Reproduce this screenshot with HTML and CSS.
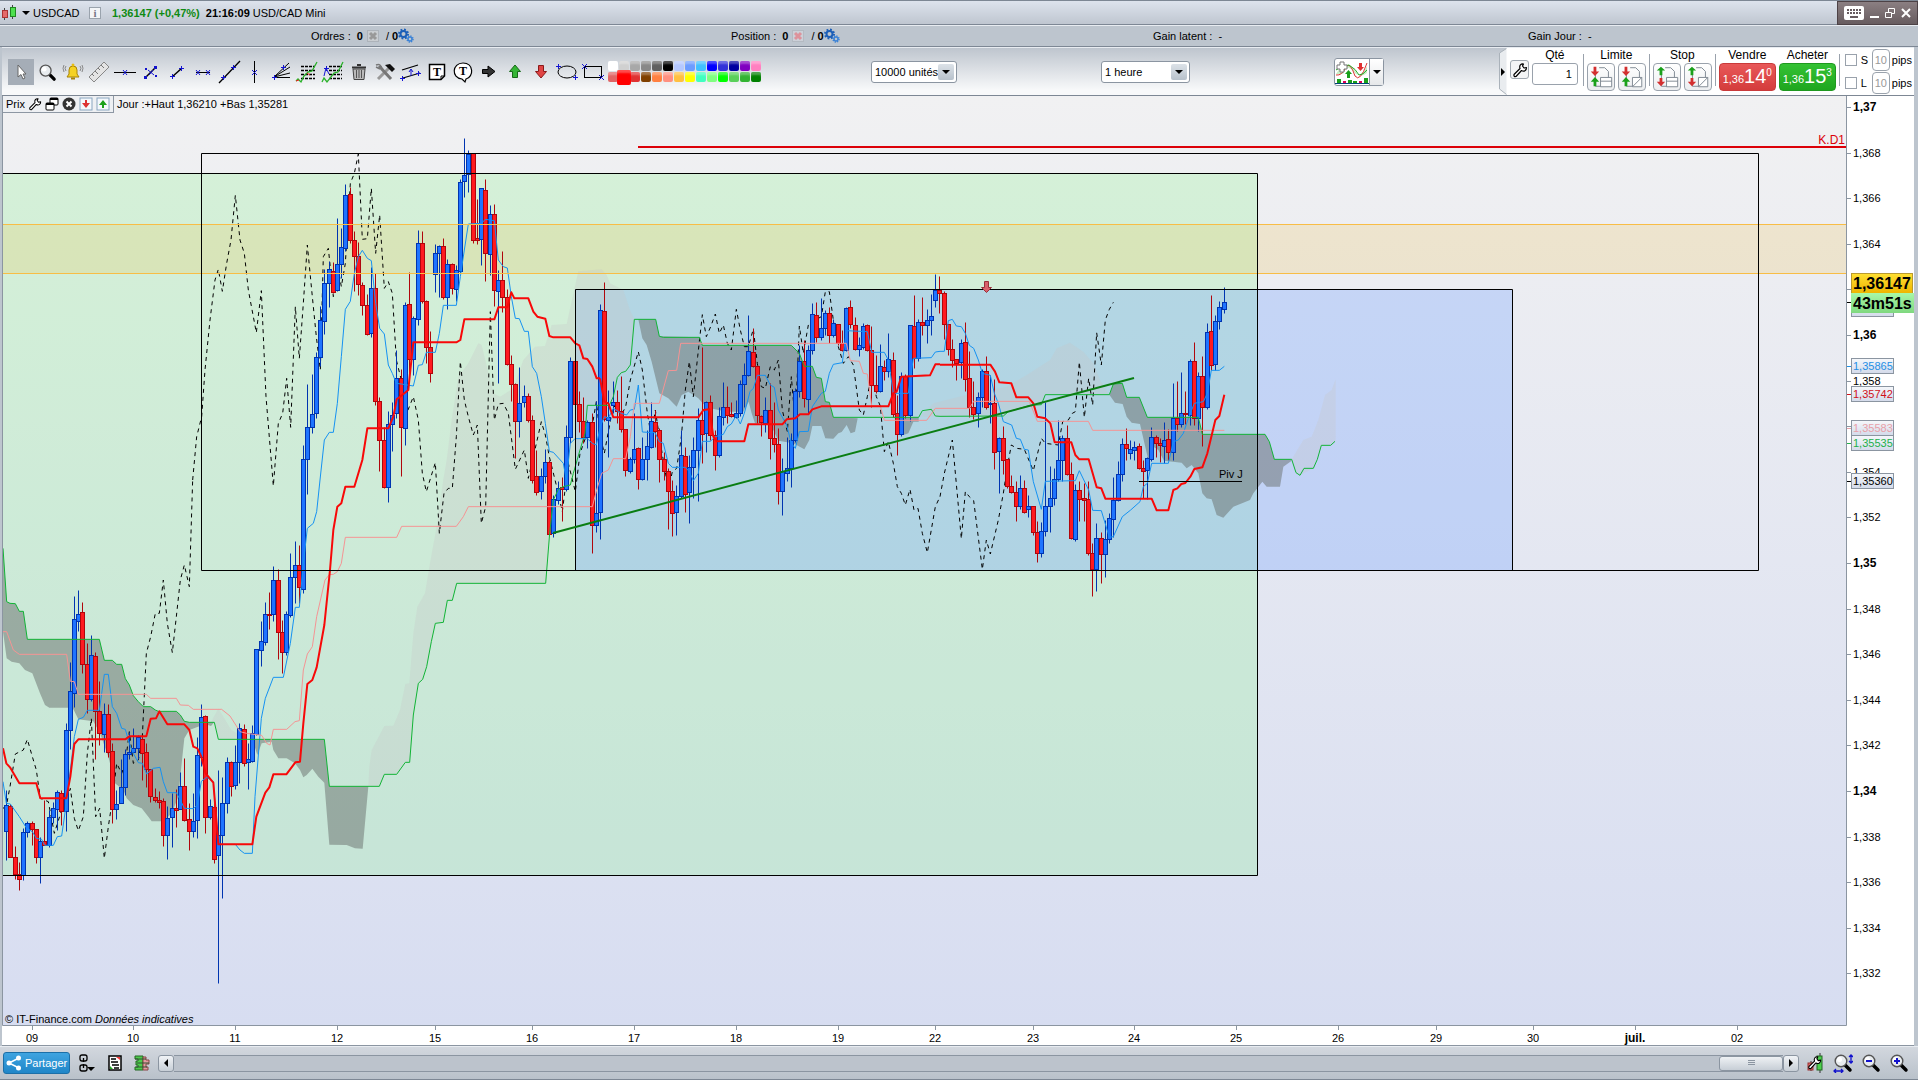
FILE: index.html
```
<!DOCTYPE html>
<html lang="fr">
<head>
    <meta charset="UTF-8">
    <meta name="viewport" content="width=device-width, initial-scale=1.0">
    <title>USDCAD - USD/CAD Mini</title>
    <link rel="stylesheet" href="styles.css">
</head>
<body>
    <svg class="defs" aria-hidden="true">
        <defs>
            <symbol id="gears" viewBox="0 0 16 16">
                <circle cx="5.500" cy="6" r="3" fill="none" stroke="#1c5fb8" stroke-width="2"/>
                <circle cx="5.500" cy="6" r="4.500" fill="none" stroke="#1c5fb8" stroke-width="2" stroke-dasharray="1.800 1.730"/>
                <circle cx="12" cy="11" r="2" fill="none" stroke="#3b82d6" stroke-width="1.500"/>
                <circle cx="12" cy="11" r="3" fill="none" stroke="#3b82d6" stroke-width="1.500" stroke-dasharray="1.200 1.150"/>
            </symbol>
            <symbol id="wrench" viewBox="0 0 16 16">
                <path d="M2 12.500 L8 6.500 C7 3.500 9 1.500 11.500 2 L10.500 4 L12 6 L14.500 5.500 C14.500 8.500 12 10 9.500 8.500 L4 14.500 Q1.500 15 2 12.500 Z" fill="#fff" stroke="#000" stroke-width="1.200" stroke-linejoin="round"/>
            </symbol>
            <symbol id="glass" viewBox="0 0 20 20">
                <path d="M11.500 11.500 L17 17" stroke="#000" stroke-width="3.500" stroke-linecap="round"/>
                <circle cx="8" cy="8" r="5.800" fill="#e8ecef" stroke="#555" stroke-width="1.400"/>
                <circle cx="6.500" cy="6.500" r="2.500" fill="#fff"/>
            </symbol>
            <symbol id="order-limit" viewBox="0 0 28 28">
                <path d="M12 4 H18 L22 8 V16 M8 10 V24 H14" fill="none" stroke="#7b858f"/>
                <path d="M6 3 H9 V8 H12 L7.500 13 L3 8 H6 Z" fill="#d32f2f"/>
                <path d="M6 24 H9 V19 H12 L7.500 14 L3 19 H6 Z" fill="#1aa01a"/>
            </symbol>
            <symbol id="order-stop" viewBox="0 0 28 28">
                <path d="M12 4 H18 L22 8 V16 M8 10 V24 H14" fill="none" stroke="#7b858f"/>
                <path d="M6 12 H9 V7 H12 L7.500 3 L3 7 H6 Z" fill="#1aa01a"/>
                <path d="M6 15 H9 V19 H12 L7.500 24 L3 19 H6 Z" fill="#d32f2f"/>
            </symbol>
            <symbol id="box-line" viewBox="0 0 28 28"><path d="M13.500 14.500 H25.500 V24.500 H13.500 Z M13.500 18.500 H25.500" fill="#fff" stroke="#7b858f"/></symbol>
            <symbol id="box-slash" viewBox="0 0 28 28"><path d="M14.500 14.500 H24.500 V24.500 H14.500 Z M14.500 24.500 L24.500 14.500" fill="#fff" stroke="#7b858f"/></symbol>
        </defs>
    </svg>

    <header class="titlebar">
        <svg class="logo" width="16" height="16" viewBox="0 0 16 16">
            <path d="M3.500 3 V15 M11.500 0 V14" stroke="#444"/>
            <rect x="1.500" y="5.500" width="5" height="7" fill="#e46a6a" stroke="#a33"/>
            <rect x="9.500" y="2.500" width="5" height="9" fill="#4ee04e" stroke="#282"/>
        </svg>
        <span class="caret"></span>
        <span class="symbol">USDCAD</span>
        <button class="info" title="Informations">i</button>
        <b class="quote">1,36147 (+0,47%)</b>
        <b class="clock">21:16:09</b>
        <span>USD/CAD Mini</span>
        <div class="window-buttons">
            <button title="Clavier"><svg width="20" height="14" viewBox="0 0 20 14"><rect width="20" height="14" rx="2" fill="#fff"/><path d="M3 4 H17 M3 7 H17" stroke="#675c60" stroke-width="2" stroke-dasharray="2 1"/><path d="M6 11 H14" stroke="#675c60" stroke-width="2"/></svg></button>
            <button title="Réduire"><svg width="9" height="14" viewBox="0 0 9 14"><path d="M0 11 H9" stroke="#fff" stroke-width="2"/></svg></button>
            <button title="Restaurer"><svg width="10" height="14" viewBox="0 0 10 14"><path d="M3.500 6 V2.500 H9.500 V7.500 H7 M0.500 6.500 H6.500 V11.500 H0.500 Z" fill="none" stroke="#fff"/></svg></button>
            <button title="Fermer"><svg width="10" height="14" viewBox="0 0 10 14"><path d="M1 3 L9 11 M9 3 L1 11" stroke="#fff" stroke-width="2"/></svg></button>
        </div>
    </header>

    <section class="status">
        <div>Ordres : <b>0</b>
            <svg width="14" height="14" viewBox="0 0 14 14"><rect x="1.500" y="1.500" width="11" height="11" fill="#c9cdd1" stroke="#adb3ba"/><path d="M4 4 L10 10 M10 4 L4 10" stroke="#999" stroke-width="3"/></svg>
            <span class="slash">/</span> <b>0</b><svg class="gear" width="16" height="16"><use href="#gears"/></svg>
        </div>
        <div>Position : <b>0</b>
            <svg width="14" height="14" viewBox="0 0 14 14"><rect x="1.500" y="1.500" width="11" height="11" fill="#ccd0d8" stroke="#b4bac2"/><path d="M4 4 L10 10 M10 4 L4 10" stroke="#dd929b" stroke-width="3"/></svg>
            <span class="slash">/</span> <b>0</b><svg class="gear" width="16" height="16"><use href="#gears"/></svg>
        </div>
        <div>Gain latent : &nbsp;-</div>
        <div>Gain Jour : &nbsp;-</div>
    </section>

    <section class="toolbar">
        <div class="tools">
            <button class="active" title="Sélection"><svg viewBox="0 0 26 26"><path d="M10 6 V18 L13 15.500 L15 20 L17 19 L15 15 H18 Z" fill="#fff" stroke="#666"/></svg></button>
            <button title="Loupe"><svg viewBox="0 0 26 26"><use href="#glass" x="4" y="4" width="19" height="19"/></svg></button>
            <button title="Alerte"><svg viewBox="0 0 26 26"><path d="M7 18 L9 15 V11 Q9 7 13 7 Q17 7 17 11 V15 L19 18 Z" fill="#f5d223" stroke="#a88408"/><circle cx="13" cy="6" r="1.500" fill="#e7bd10"/><path d="M11 19.500 H15" stroke="#a88408" stroke-width="2"/><path d="M6 7 Q4 9 6 12 M4 6 Q2 9 4 13 M20 7 Q22 9 20 12 M22 6 Q24 9 22 13" fill="none" stroke="#888"/></svg></button>
            <button title="Règle"><svg viewBox="0 0 26 26"><path d="M3 18 L18 3 L23 8 L8 23 Z" fill="#e4e4e4" stroke="#888"/><path d="M6 15 L8 17 M9 12 L12 15 M12 9 L14 11 M15 6 L18 9" stroke="#777"/></svg></button>
            <button title="Ligne horizontale"><svg viewBox="0 0 26 26"><path d="M2 13.500 H24" stroke="#000"/><path class="mark" d="M11 11 L15 16 M15 11 L11 16"/></svg></button>
            <button title="Segment"><svg viewBox="0 0 26 26"><path d="M8 18 L18 8" stroke="#000" stroke-width="1.500"/><path d="M6 17 h3 v3 h-3 Z M16 7 h3 v3 h-3 Z M7 9 h2 v2 h-2 Z M17 16 h2 v2 h-2 Z" fill="#11c"/><path class="mark" d="M10 11 L16 16 M11 16 L15 11"/></svg></button>
            <button title="Droite"><svg viewBox="0 0 26 26"><path d="M8 18 L18 9" stroke="#000" stroke-width="1.500"/><path class="mark" d="M6 17.500 H11 M8.500 15 V20 M15 9.500 H20 M17.500 7 V12"/></svg></button>
            <button title="Segment horizontal"><svg viewBox="0 0 26 26"><path d="M6 13.500 H20" stroke="#000"/><path class="mark" d="M6 11 L10 16 M10 11 L6 16 M16 11 L20 16 M20 11 L16 16"/></svg></button>
            <button title="Ligne de tendance"><svg viewBox="0 0 26 26"><path d="M3 24 L24 2" stroke="#000" stroke-width="1.300"/><path class="mark" d="M5 18.500 H10 M7.500 16 V21 M15 8.500 H20 M17.500 6 V11"/></svg></button>
            <button title="Ligne verticale"><svg viewBox="0 0 26 26"><path d="M12.500 2 V24" stroke="#000"/><path class="mark" d="M10 11 L15 16 M15 11 L10 16"/></svg></button>
            <button title="Éventail"><svg viewBox="0 0 26 26"><path d="M6 18.500 H22 M6 18 L21 4 M6 18 L22 8 M6 18 L22 14" stroke="#000" fill="none"/><path class="mark" d="M4 18.500 H9 M6.500 16 V21 M13 8.500 H18 M15.500 6 V11"/></svg></button>
            <button title="Retracement"><svg viewBox="0 0 26 26"><path d="M7 7.500 H21 M7 11.500 H21 M7 15.500 H21 M7 19.500 H21" stroke="#000" stroke-width="1.500" stroke-dasharray="3 1"/><path d="M2 22 L4 20 L7 23 L10 17 L14 13 L18 12 L23 3" fill="none" stroke="#29b229" stroke-width="1.300"/><path d="M2 22 L5 21 M13 14 L16 16" stroke="#e22"/></svg></button>
            <button title="Projection"><svg viewBox="0 0 26 26"><path d="M9 7.500 H22 M9 11.500 H22 M9 15.500 H22 M9 19.500 H22" stroke="#000" stroke-width="1.500" stroke-dasharray="3 1"/><path d="M2 23 L4 19 L7 23 L14 14 L18 13 L23 3" fill="none" stroke="#29b229" stroke-width="1.300"/><path class="mark" d="M4 17 L6 9 L9 15 M4 9.500 H9 M6.500 7 V12"/></svg></button>
            <button title="Corbeille"><svg viewBox="0 0 26 26"><path d="M6 8.500 H20 M11 6 H15" stroke="#333" stroke-width="2"/><path d="M7 10 H19 L18 20.500 H8 Z" fill="#bbb" stroke="#444"/><path d="M10.500 11 V19 M13 11 V19 M15.500 11 V19" stroke="#555"/></svg></button>
            <button title="Réglages"><svg viewBox="0 0 26 26"><path d="M6 20 L18 8" stroke="#999" stroke-width="3"/><path d="M7 7 L19 20" stroke="#777" stroke-width="3"/><path d="M4 6 Q9 4 10 10 M4 8 L8 10" stroke="#777" fill="none" stroke-width="1.500"/><path d="M13 6 L18 5 L23 10 L20 13 Z" fill="#111"/></svg></button>
            <button title="Canal"><svg viewBox="0 0 26 26"><path d="M4 11 L20 6 M5 19 L22 14" stroke="#000" stroke-width="1.300"/><path class="mark" d="M2 19.500 H7 M4.500 17 V22 M18 14.500 H23 M20.500 12 V17 M13 17 V11 M11 13 L13 10 L15 13"/></svg></button>
            <button title="Texte"><svg viewBox="0 0 26 26"><path d="M5.500 5.500 H20.500 V17 L17 20.500 H5.500 Z" fill="#fff" stroke="#000" stroke-width="1.500"/><path d="M17 20 V17 H20" fill="none" stroke="#000"/><text x="13" y="17" class="letter">T</text></svg></button>
            <button title="Bulle"><svg viewBox="0 0 26 26"><path d="M12 20 C1 19 2 4 13 4 C24 4 24 18 16 20 L15 23 Z" fill="#fff" stroke="#000" stroke-width="1.200"/><text x="13" y="16" class="letter">T</text></svg></button>
            <button title="Flèche"><svg viewBox="0 0 26 26"><path d="M6.500 10.500 H12 V7 L19 12.500 L12 18 V14.500 H6.500 Z" fill="#333" stroke="#000"/></svg></button>
            <button title="Flèche haut"><svg viewBox="0 0 26 26"><path d="M13 6 L18.500 12.500 H15.500 V18.500 H10.500 V12.500 H7.500 Z" fill="#35b535" stroke="#176817"/></svg></button>
            <button title="Flèche bas"><svg viewBox="0 0 26 26"><path d="M13 19 L18.500 12.500 H15.500 V6.500 H10.500 V12.500 H7.500 Z" fill="#e04444" stroke="#8a1a1a"/></svg></button>
            <button title="Ellipse"><svg viewBox="0 0 26 26"><ellipse cx="13" cy="13" rx="9" ry="6" fill="none" stroke="#000"/><path class="mark" d="M2 7.500 H7 M4.500 5 V10 M19 18.500 H24 M21.500 16 V21"/></svg></button>
            <button title="Rectangle"><svg viewBox="0 0 26 26"><rect x="4.500" y="7.500" width="17" height="11" fill="none" stroke="#000"/><path class="mark" d="M2 5 L7 10 M7 5 L2 10 M19 16 L24 21 M24 16 L19 21"/></svg></button>
        </div>
        <div class="palette" id="palette"></div>
        <div class="drop units">
            <select aria-label="Nombre d'unités"><option>10000 unités</option></select>
            <span class="drop-arrow"></span>
        </div>
        <div class="drop period">
            <select aria-label="Unité de temps"><option>1 heure</option></select>
            <span class="drop-arrow"></span>
        </div>
        <div class="indicators">
            <button title="Ajouter un indicateur">
                <svg width="34" height="26" viewBox="0 0 34 26">
                    <path d="M1 15 Q7 4 13 6 Q18 8 23 16 Q27 18 32 7 V14 Q25 20 19 13 Q12 4 8 15 Z" fill="#c8efc8"/>
                    <path d="M1 16 Q7 17 11 8 Q15 2 20 17 Q25 24 32 4" fill="none" stroke="#d33"/>
                    <path d="M1 11 Q7 6 14 6 Q21 10 24 16 Q28 16 32 11" fill="none" stroke="#2a2"/>
                    <path d="M5 3 h4 v3 h3 v4 h-3 v3 h-4 v-3 h-3 v-4 h3 Z" fill="#fff" stroke="#777"/>
                    <path d="M12 19 v-4 h-2 l3.500 -4 l3.500 4 h-2 v4 Z" fill="#1aa01a"/>
                    <path d="M24 4 h3 v4 h2 l-3.500 4 l-3.500 -4 h2 Z" fill="#e03030"/>
                    <path d="M2 20 h4 v4 h-4 Z M13 21 h4 v3 h-4 Z M18 22 h4 v2 h-4 Z M29 19 h4 v5 h-4 Z" fill="#1aa01a"/>
                    <path d="M8 22 h3 v2 h-3 Z M24 22 h3 v2 h-3 Z" fill="#d05"/>
                    <path d="M0 24.500 H34" stroke="#047"/>
                </svg>
            </button>
            <button class="more" title="Plus"><span class="caret"></span></button>
        </div>
        <form class="trading">
            <svg class="collapse" width="9" height="47" viewBox="0 0 9 47"><path d="M8.500 0.500 L1.500 5 V41 L8.500 46.500" fill="#e9ecef" stroke="#aab2ba"/><path d="M3 20 L7 24 L3 28 Z" fill="#000"/></svg>
            <button type="button" class="small" title="Options"><svg width="16" height="16"><use href="#wrench"/></svg></button>
            <div class="field qty">
                <label for="qty">Qté</label>
                <input id="qty" type="text" value="1">
            </div>
            <div class="field split">
                <span>Limite</span>
                <div class="pair">
                    <button type="button" title="Vente limite"><svg viewBox="0 0 28 28"><use href="#order-limit"/><use href="#box-line"/></svg></button>
                    <button type="button" title="Achat limite"><svg viewBox="0 0 28 28"><use href="#order-limit"/><use href="#box-slash"/></svg></button>
                </div>
            </div>
            <div class="field split">
                <span>Stop</span>
                <div class="pair">
                    <button type="button" title="Vente stop"><svg viewBox="0 0 28 28"><use href="#order-stop"/><use href="#box-line"/></svg></button>
                    <button type="button" title="Achat stop"><svg viewBox="0 0 28 28"><use href="#order-stop"/><use href="#box-slash"/></svg></button>
                </div>
            </div>
            <div class="field split">
                <span>Vendre</span>
                <button type="button" class="deal sell">1,36<strong>14</strong><sup>0</sup></button>
            </div>
            <div class="field">
                <span>Acheter</span>
                <button type="button" class="deal buy">1,36<strong>15</strong><sup>3</sup></button>
            </div>
            <div class="protect split">
                <div><input type="checkbox" id="useStop"><label for="useStop">S</label><input type="text" value="10" aria-label="Stop en pips"><span>pips</span></div>
                <div><input type="checkbox" id="useLimit"><label for="useLimit">L</label><input type="text" value="10" aria-label="Limite en pips"><span>pips</span></div>
            </div>
        </form>
    </section>

    <main class="chart">
        <svg id="chart" viewBox="0 96 1918 950" preserveAspectRatio="none"></svg>
        <div class="legend">
            <div class="legend-tools">
                <span>Prix</span>
                <button title="Configurer"><svg width="14" height="14"><use href="#wrench"/></svg></button>
                <button title="Dupliquer"><svg width="14" height="14" viewBox="0 0 14 14"><rect x="5" y="1" width="8" height="7" rx="1" fill="#fff" stroke="#000"/><path d="M5 2 H13" stroke="#000" stroke-width="2"/><rect x="1" y="6" width="8" height="7" rx="1" fill="#fff" stroke="#000"/><path d="M1 7 H9" stroke="#000" stroke-width="2"/></svg></button>
                <button title="Fermer"><svg width="14" height="14" viewBox="0 0 14 14"><circle cx="7" cy="7" r="6.500" fill="#333"/><path d="M4.500 4.500 L9.500 9.500 M9.500 4.500 L4.500 9.500" stroke="#fff" stroke-width="2"/></svg></button>
                <button title="Descendre"><svg width="14" height="14" viewBox="0 0 14 14"><rect x="1" y="1" width="12" height="12" fill="#f4f8fc" stroke="#8aa6c0"/><path d="M6 3 H8 V6 H11 L7 11 L3 6 H6 Z" fill="#dd3333"/></svg></button>
                <button title="Monter"><svg width="14" height="14" viewBox="0 0 14 14"><rect x="1" y="1" width="12" height="12" fill="#f4f8fc" stroke="#8aa6c0"/><path d="M6 11 H8 V8 H11 L7 3 L3 8 H6 Z" fill="#1aa01a"/></svg></button>
            </div>
            <span>Jour :+Haut 1,36210 +Bas 1,35281</span>
        </div>
    </main>

    <footer class="bottombar">
        <button class="share"><svg width="16" height="16" viewBox="0 0 16 16"><path d="M13 3 L3 8 L13 13" fill="none" stroke="#fff" stroke-width="1.500"/><circle cx="12.500" cy="3" r="2.500" fill="#fff"/><circle cx="3" cy="8" r="2.500" fill="#fff"/><circle cx="12.500" cy="13" r="2.500" fill="#fff"/></svg>Partager</button>
        <div class="links">
            <button title="Lier"><svg width="18" height="20" viewBox="0 0 18 20"><path d="M5 8 H4 Q2 8 2 6 V4 Q2 2 4 2 H7 Q9 2 9 4 V6 Q9 8 7 8 H6 M5 12 H4 Q2 12 2 14 V16 Q2 18 4 18 H7 Q9 18 9 16 V14 Q9 12 7 12 H6 M5.500 5 V9 M5.500 11 V15" fill="none" stroke="#000" stroke-width="1.300"/><path d="M9 14 H17 L13 18 Z" fill="#000"/></svg></button>
            <button title="Liste"><svg width="14" height="16" viewBox="0 0 14 16"><rect x="1" y="1" width="12" height="14" fill="#fff" stroke="#000" stroke-width="1.500"/><path d="M3 4 H8 M3 7 H10 M4 10 H11 M6 13 H11" stroke="#000" stroke-width="1.500"/><path d="M8 2 H12 V5 Z" fill="#e33"/><path d="M2 11 V14 H5 Z" fill="#2a2"/></svg></button>
            <button title="Carnet"><svg width="16" height="16" viewBox="0 0 16 16"><path d="M1 1 H9 V15 H1 V12 H4 V10 H2 V6 H4 V4 H1 Z" fill="#4ccb4c" stroke="#262"/><path d="M9 2 H12 V5 H15 V9 H12 V12 H14 V15 H9 Z" fill="#e29aa0" stroke="#844"/><path d="M1 4 H12 M3 8 H15 M2 12 H13" stroke="#353"/></svg></button>
        </div>
        <div class="scroll">
            <button class="scroll-left" title="Reculer"><span></span></button>
            <div class="track"><div class="thumb"></div></div>
            <button class="scroll-right" title="Avancer"><span></span></button>
        </div>
        <button title="Style du graphique"><svg width="18" height="20" viewBox="0 0 18 20"><path d="M4 8 V18 M13 0 V20" stroke="#333"/><rect x="1" y="10" width="5" height="7" fill="#e06a6a" stroke="#933"/><rect x="10" y="3" width="5" height="14" fill="#4cd04c" stroke="#262"/><use href="#wrench" x="0" y="2" width="15" height="15"/></svg></button>
        <button title="Ajuster"><svg width="20" height="20" viewBox="0 0 20 20"><use href="#glass" width="20" height="20"/><path d="M1 18 H10 M3 16 L1 18 L3 20 M8 16 L10 18 L8 20 M18 2 V10 M16 4 L18 2 L20 4 M16 8 L18 10 L20 8" fill="none" stroke="#11c" stroke-width="1.300"/></svg></button>
        <button title="Zoom arrière"><svg width="20" height="20" viewBox="0 0 20 20"><use href="#glass" width="20" height="20"/><path d="M5 8 H11" stroke="#11c" stroke-width="2"/></svg></button>
        <button title="Zoom avant"><svg width="20" height="20" viewBox="0 0 20 20"><use href="#glass" width="20" height="20"/><path d="M5 8 H11 M8 5 V11" stroke="#11c" stroke-width="2"/></svg></button>
    </footer>
    <script src="chart.js"></script>
</body>
</html>
```

FILE: styles.css
```
* {
    box-sizing: border-box;
}
body {
    margin: 0;
    height: 100vh;
    display: flex;
    flex-direction: column;
    overflow: hidden;
    background: #bdc5ce;
    color: #000;
    font-family: "Liberation Sans", Arial, sans-serif;
    font-size: 11px;
    line-height: 14px;
}
button {
    font: inherit;
    color: inherit;
    border: none;
    background: none;
    padding: 0;
}
button svg {
    display: block;
}
.defs {
    display: none;
}

/* barre de titre */
.titlebar {
    display: flex;
    align-items: center;
    height: 25px;
    padding-left: 1px;
    border-top: 1px solid #7d8794;
    border-bottom: 1px solid #7d8794;
    background: linear-gradient(#dde3ed, #bfc6d0);
}
.caret {
    border: 4px solid transparent;
    border-top-color: #000;
    border-bottom: none;
}
.titlebar .caret {
    margin: 0 3px 0 5px;
}
.symbol {
    width: 56px;
}
.info {
    width: 12px;
    height: 12px;
    margin-right: 11px;
    border: 1px solid #9aa3ad;
    background: #f3f5f7;
    color: #778;
    font-family: "Liberation Serif", serif;
    font-weight: bold;
    line-height: 10px;
}
.quote {
    color: #0e8a12;
    margin-right: 6px;
}
.clock {
    margin-right: 3px;
}
.window-buttons {
    display: flex;
    align-items: center;
    gap: 6px;
    height: 24px;
    margin-left: auto;
    padding: 0 6px;
    border: 1px solid #4d4246;
    background: linear-gradient(#8b7f82, #675c5f);
}

/* ordres, position, gains */
.status {
    display: grid;
    grid-template-columns: 420fr 422fr 375fr 390fr;
    align-items: center;
    height: 22px;
    padding-left: 311px;
    border-top: 1px solid #e8ecf1;
    border-bottom: 1px solid #7d8794;
    background: #bdc5ce;
}
.status div {
    display: flex;
    align-items: center;
    gap: 3px;
    white-space: pre;
}
.status .slash {
    margin-left: 3px;
}
.status .gear {
    margin-left: -3px;
}

/* outils */
.toolbar {
    display: flex;
    align-items: center;
    height: 49px;
    margin: 0 4px 0 2px;
    padding-left: 6px;
    border-top: 1px solid #e8ecf1;
    border-bottom: 1px solid #7d8794;
    background: linear-gradient(#bec5ce, #f8f9fa 90%);
}
.tools {
    display: flex;
}
.tools button {
    width: 26px;
    height: 26px;
}
.tools .active {
    background: #a5adb7;
}
.mark {
    fill: none;
    stroke: #1414d2;
}
.letter {
    font-family: "Liberation Serif", serif;
    font-size: 12px;
    font-weight: bold;
    text-anchor: middle;
}
.palette {
    display: grid;
    grid-template-columns: repeat(14, 11px);
    grid-auto-rows: 11px;
    margin-left: 2px;
}
.palette button {
    margin: 0 1px 1px 0;
    border-radius: 2px;
    box-shadow: inset 0 4px 2px -1px rgba(255, 255, 255, 0.3);
}
.palette .picked {
    margin: -2px -1px -2px -2px;
    z-index: 1;
}
.drop {
    position: relative;
}
.drop select {
    width: 100%;
    height: 22px;
    padding: 0 3px;
    border: 1px solid #8b95a1;
    border-radius: 3px;
    background: #fff;
    font: inherit;
    appearance: none;
}
.drop-arrow {
    position: absolute;
    right: 3px;
    top: 3px;
    width: 16px;
    height: 16px;
    border-radius: 2px;
    background: linear-gradient(#dce2e8, #b7c1cb);
    pointer-events: none;
}
.drop-arrow::after {
    content: "";
    position: absolute;
    left: 4px;
    top: 6px;
    border: 4px solid transparent;
    border-top-color: #000;
    border-bottom: none;
}
.units {
    width: 86px;
    margin-left: 109px;
}
.period {
    width: 89px;
    margin-left: 144px;
}
.indicators {
    display: flex;
    height: 28px;
    margin-left: 144px;
    border: 1px solid #8b95a1;
    border-radius: 3px;
    background: #fff;
}
.indicators .more {
    display: flex;
    align-items: center;
    justify-content: center;
    width: 14px;
    border-left: 1px solid #8b95a1;
    background: linear-gradient(#fff, #e6e8ea);
}

/* passage d'ordres */
.trading {
    display: flex;
    height: 47px;
    margin-left: auto;
    padding-right: 2px;
    background: linear-gradient(90deg, transparent 8px, #fff 8px);
}
.trading .small {
    width: 19px;
    height: 19px;
    margin: 12px 3px 0 3px;
    padding: 1px;
    border: 1px solid #a0a8b0;
    border-radius: 3px;
    background: #f4f5f6;
}
.field {
    display: flex;
    flex-direction: column;
    align-items: center;
    margin-right: 3px;
}
.qty {
    margin-right: 5px;
}
.field label, .field > span {
    font-size: 12px;
    line-height: 15px;
}
.split {
    position: relative;
    padding-left: 4px;
}
.split::before {
    content: "";
    position: absolute;
    left: 0;
    top: 6px;
    height: 32px;
    border-left: 1px solid #9aa2ac;
}
.field input {
    width: 46px;
    height: 22px;
    padding: 0 5px;
    border: 1px solid #9aa2ac;
    border-radius: 3px;
    font: inherit;
    text-align: right;
}
.pair {
    display: flex;
    gap: 3px;
}
.pair button {
    width: 28px;
    height: 28px;
    border: 1px solid #9aa2ac;
    border-radius: 4px;
    background: linear-gradient(#fff, #eceef0);
}
.deal {
    width: 57px;
    height: 28px;
    border-radius: 4px;
    color: #fff;
    white-space: nowrap;
}
.deal strong {
    font-size: 20px;
    font-weight: normal;
}
.deal sup {
    font-size: 10px;
    line-height: 10px;
    vertical-align: 7px;
}
.sell {
    background: linear-gradient(#e85858, #d43c3c);
    border: 1px solid #c93a3a;
}
.buy {
    background: linear-gradient(#34c234, #1fa61f);
    border: 1px solid #1f991f;
}
.protect div {
    display: flex;
    align-items: center;
    height: 23px;
}
.protect input[type="checkbox"] {
    width: 12px;
    height: 12px;
    margin: 0 4px 0 2px;
    border: 1px solid #9aa2ac;
    background: #fff;
    appearance: none;
}
.protect label {
    width: 11px;
}
.protect input[type="text"] {
    width: 18px;
    height: 22px;
    margin-right: 2px;
    padding: 0;
    border: 1px solid #9aa2ac;
    border-radius: 4px;
    color: #999;
    font: inherit;
    text-align: center;
}

/* graphique */
.chart {
    position: relative;
    flex: 1;
    min-height: 0;
}
#chart {
    display: block;
    width: 100%;
    height: 100%;
    font-size: 11px;
}
.legend {
    position: absolute;
    left: 3px;
    top: 0;
    display: flex;
    gap: 3px;
}
.legend-tools {
    display: flex;
    align-items: center;
    gap: 3px;
    height: 17px;
    padding: 0 3px;
    border: solid #8d97a3;
    border-width: 0 1px 1px 0;
    background: #eef0f3;
}
.legend > span {
    line-height: 17px;
}
.frame {
    fill: none;
    stroke: #000;
}
.cloud-down {
    fill: rgba(104, 110, 108, 0.5);
}
.cloud-up {
    fill: rgba(200, 200, 200, 0.3);
}
.span, .base, .tenkan, .kijun, .chikou {
    fill: none;
    stroke-linejoin: round;
    vector-effect: non-scaling-stroke;
}
.span {
    stroke: #12b436;
}
.base {
    stroke: #f59494;
}
.tenkan {
    stroke: #1592f2;
}
.kijun {
    stroke: #f80808;
    stroke-width: 2px;
}
.chikou {
    stroke: #000;
    stroke-dasharray: 4 4;
}
.up {
    fill: #1f74ff;
    stroke: #0034b0;
}
.down {
    fill: #ff1a1f;
    stroke: #b0060c;
}
.major {
    font-size: 12px;
    font-weight: bold;
}
.time {
    text-anchor: middle;
}
.last {
    font-size: 16px;
    font-weight: bold;
}

/* barre du bas */
.bottombar {
    display: flex;
    align-items: center;
    gap: 8px;
    height: 34px;
    padding: 0 9px 0 3px;
    border-top: 1px solid #e8ecf1;
    border-bottom: 1px solid #7d8794;
    background: linear-gradient(#d2d7de, #b9c1ca);
}
.share {
    display: flex;
    align-items: center;
    gap: 3px;
    width: 67px;
    height: 22px;
    padding-left: 2px;
    border: 1px solid #1b6fa8;
    border-radius: 3px;
    background: linear-gradient(#3fa4e0, #1f86c8);
    color: #fff;
}
.links {
    display: flex;
    align-items: center;
    gap: 12px;
}
.scroll {
    display: flex;
    flex: 1;
    height: 17px;
}
.scroll button {
    display: flex;
    align-items: center;
    justify-content: center;
    width: 16px;
    border: 1px solid #8b95a1;
    border-radius: 3px;
    background: linear-gradient(#f0f3f6, #c7ced6);
}
.scroll span {
    border: 4px solid transparent;
}
.scroll-left span {
    border-right-color: #000;
    border-left: none;
}
.scroll-right span {
    border-left-color: #000;
    border-right: none;
}
.track {
    flex: 1;
    border: solid #8b95a1;
    border-width: 1px 0;
    background: #bcc3cc;
}
.thumb {
    width: 64px;
    height: 15px;
    margin-left: auto;
    border: 1px solid #8b95a1;
    border-radius: 3px;
    background: repeating-linear-gradient(#8b95a1 0 1px, transparent 1px 2px) center / 7px 6px no-repeat, linear-gradient(#eef1f4, #c7ced6);
}
```

FILE: chart.js
```
const svg = document.getElementById('chart');
const NS = 'http://www.w3.org/2000/svg';

function add(tag, attrs, text) {
    const el = document.createElementNS(NS, tag);
    for (const key in attrs) el.setAttribute(key, attrs[key]);
    if (text) el.textContent = text;
    svg.appendChild(el);
    return el;
}

// Each part of the history has its own origin, units are thirds of a pixel.
// candles: x, direction, body top, body bottom, high, low
const parts = [
    {
        x: 0, y: 480,
        candles: `19 u 976 1054 930 1140;31 d 979 1130 972 1132;46 d 1130 1182 1098 1198;58 d 1182 1196 1146 1230;70 u 1057 1186 1045 1200;82 u 1030 1057 1022 1070;97 d 1028 1048 1024 1095;109 d 1048 1132 1048 1150;
121 u 1084 1132 1072 1208;134 d 1084 1094 960 1096;148 u 1012 1096 990 1102;160 u 985 1012 967 1030;172 u 937 987 930 1050;185 d 940 994 930 1036;199 u 751 994 730 1052;211 u 634 751 545 806;
223 u 418 638 348 680;235 u 401 422 330 452;247 d 397 553 366 578;262 d 553 658 490 700;274 u 526 656 465 664;287 d 529 694 516 836;299 d 694 760 604 795;313 u 703 762 670 815;
325 d 703 815 672 830;337 d 812 986 790 1028;349 u 973 986 930 1016;365 u 922 970 838 970;376 u 823 922 808 946;388 u 817 823 755 838;401 u 805 817 745 820;415 u 772 803 765 838;
427 d 778 818 768 900;439 d 817 868 790 920;452 d 868 949 868 965;466 d 952 961 925 967;478 d 961 965 932 985;490 d 964 1064 955 1097;502 u 1015 1066 978 1136;517 u 985 1012 938 1100;
529 d 985 989 928 1040;541 u 919 988 877 988;553 d 919 1021 834 1024;568 d 1018 1054 968 1110;580 u 1024 1054 940 1070;592 u 826 1021 772 1074;604 u 712 830 672 858;617 d 709 1010 706 1058;
630 u 979 1010 956 1016;643 d 982 1136 960 1148;655 u 1064 1126 870 1510;667 u 970 1064 892 1254;682 u 847 970 832 1000;694 d 847 919 842 948;706 u 847 916 796 926;718 u 745 847 730 908;
733 d 748 850 732 858;745 u 838 846 790 926;757 u 760 842 736 846;769 u 508 763 508 766;784 u 484 511 424 558;796 u 401 486 366 496;808 d 401 404 336 446;820 u 301 403 258 424;
835 d 301 455 268 536;847 d 455 517 420 578;859 u 403 517 394 524;871 u 292 406 220 412;886 u 254 290 183 370;898 d 256 322 195 370`,
        down: [
            '9,205 20,365 30,370 46,371 58,394 70,394 82,478 298,478 313,541 337,541 350,553 365,553 376,596 388,615 400,647 415,665 430,680 452,680 466,690 475,694 529,694 541,705 553,724 568,727 643,727 633,738 615,732 590,742 568,750 553,775 545,850 535,950 515,1000 490,1024 455,1024 445,1010 425,985 400,975 380,955 370,930 345,910 325,830 300,760 280,724 235,718 218,683 148,683 135,675 120,640 97,580 75,570 58,550 35,545 20,535 9,455',
            '757,778 772,825 785,790 815,785 820,810 835,835 860,835 885,850 900,870 910,892 920,885 937,866 955,890 973,908 988,1094 1040,1095 1065,1105 1088,1106 1105,919 988,919 973,778'
        ],
        up: ['633,727 655,685 670,710 694,750 720,765 740,778 655,778 643,727'],
        span: '9,205 20,365 30,370 46,371 58,394 70,394 82,478 298,478 313,541 337,541 350,553 365,553 376,596 388,615 400,647 415,665 430,680 452,680 466,690 475,694 529,694 541,705 553,724 568,727 643,727 655,778 973,778 988,919 1138,919',
        base: '9,455 20,455 40,510 58,523 200,523 211,604 223,605 235,643 439,643 452,655 529,655 541,675 565,676 580,688 665,688 690,708 720,755 740,760 785,766 800,790 810,795 820,748 860,748 885,725 898,722 910,570 922,522 937,500 950,410 975,300 988,284 1000,283 1012,275 1024,250 1036,172 1190,172 1205,139 1260,139',
        tenkan: '9,905 19,970 31,972 58,1010 80,1045 97,1055 109,1075 125,1078 134,1096 160,1096 172,1070 185,1068 199,970 211,870 223,770 235,718 250,712 262,691 298,691 313,583 325,583 337,680 350,700 365,745 376,748 388,790 400,820 415,848 427,850 440,882 460,865 480,862 490,905 502,938 529,938 541,960 553,985 580,986 592,975 604,904 620,892 640,905 655,1093 706,1093 720,1110 733,1120 757,1120 765,950 784,715 796,655 820,592 850,592 871,490 886,382 898,382 910,250 922,145',
        kijun: '9,805 19,850 30,862 58,910 109,910 121,955 199,955 211,890 223,792 235,778 376,778 388,769 439,769 452,716 468,715 478,694 502,733 553,733 568,750 580,800 592,805 604,830 617,880 640,908 655,1093 757,1093 769,1010 796,938 808,922 820,883 859,883 886,847 900,845 910,730 922,612 937,600 950,562 973,435 990,270',
        chikou: '9,985 19,978 30,920 46,822 70,810 82,778 97,830 109,870 121,955 145,965 163,1060 185,990 199,970 211,925 223,1015 235,1052 250,1010 262,820 274,715 287,1010 299,985 313,1135 325,1040 337,960 350,850 365,880 376,850 388,755 400,850 415,840 427,770 439,520 452,470 466,400 478,400 490,300 502,430 517,518 529,410 541,300 553,255 568,320 578,0'
    },
    {
        x: 180, y: 130,
        candles: `370 u 988 1378 945 1388;382 u 892 988 762 1092;397 u 853 892 732 910;409 u 682 850 666 865;421 u 571 682 528 708;433 u 460 574 418 612;448 u 418 460 394 530;460 d 424 486 396 490;
472 u 403 481 264 484;484 u 352 403 294 445;496 u 196 355 162 362;511 d 193 331 170 338;523 d 331 379 302 482;535 d 379 463 336 494;547 d 466 526 456 554;562 d 526 613 492 615;
574 u 475 610 412 620;587 d 475 812 430 826;599 d 812 931 800 1022;613 d 931 1070 890 1074;625 u 883 1072 842 1116;637 u 856 883 816 962;649 u 745 850 660 865;664 d 745 892 718 1038;
676 u 526 895 516 944;688 d 523 686 426 750;700 u 565 688 558 735;715 u 340 568 300 585;727 d 340 514 304 520;739 d 514 650 510 698;752 d 650 728 604 755;766 u 370 433 342 486;
778 u 349 370 345 500;790 d 349 502 324 506;802 u 403 502 388 536;817 d 403 475 398 492;829 u 421 478 406 514;841 u 157 424 148 430;853 u 136 154 24 202;865 u 73 133 60 185;
880 d 70 329 68 340;892 d 325 329 208 343;904 u 175 328 175 406;916 d 181 370 147 452;931 u 253 373 226 434;943 d 253 481 222 528;955 u 451 484 420 758;967 d 451 500 362 546;
982 d 500 703 478 706;994 d 703 761 674 812;1006 d 763 874 760 985;1018 u 820 874 712 920;1033 u 799 817 765 830;1045 d 799 871 788 876;1057 d 871 1051 855 1060;1069 d 1039 1087 960 1095;
1084 u 1039 1084 1015 1108;1096 u 997 1039 958 1060;1108 d 997 1211 990 1214;1120 u 1108 1208 1096 1222;1135 u 1075 1111 1052 1122;1147 d 1072 1076 1040 1172;1159 u 922 1078 885 1084;1171 u 694 922 682 938`,
        down: [],
        up: ['565,1969 568,1910 575,1860 613,1788 640,1787 660,1740 676,1662 688,1660 700,1510 712,1430 735,1390 750,1300 770,1190 790,1050 800,990 815,870 835,740 865,700 895,640 905,645 940,790 960,800 1000,775 1030,690 1065,650 1095,648 1115,585 1160,582 1195,424 1265,418 1280,435 1290,460 1330,480 1350,540 1363,568 1351,705 1337,724 1324,728 1312,742 1300,800 1288,826 1222,826 1215,910 1180,1030 1171,1065 1135,1078 1120,1110 1109,1210 1097,1360 830,1360 817,1411 802,1411 790,1477 766,1480 754,1535 740,1610 728,1648 715,1660 700,1755 689,1897 676,1897 650,1933 613,1933 598,1969'],
        span: '598,1969 613,1933 650,1933 676,1897 689,1897 700,1755 715,1660 728,1648 740,1610 754,1535 766,1480 790,1477 802,1411 817,1411 830,1360 1097,1360 1109,1210 1120,1110 1135,1078 1150,1070 1171,1065 1180,1030 1200,960 1215,910 1222,826',
        base: '720,1189 829,1189 850,1160 865,1130 1237,1130',
        tenkan: '382,1195 400,1180 410,1145 420,1050 433,930 448,907 460,907 472,820 484,680 496,538 511,514 523,430 535,380 547,361 562,385 574,392 587,520 599,595 613,612 625,705 637,730 649,760 664,762 700,768 715,706 727,704 739,667 766,667 778,610 790,526 829,526 841,440 853,360 865,282 904,280 916,268 943,272 955,390 970,410 982,414 994,500 1006,565 1018,566 1033,604 1045,604 1057,710 1070,730 1084,800 1096,880 1108,964 1120,967 1150,1000 1159,1050 1171,940 1186,925',
        kijun: '450,1320 460,1200 472,1130 484,1120 496,1070 523,1070 547,990 562,895 625,895 640,860 650,808 664,797 685,780 690,730 700,637 829,637 841,630 853,568 943,568 955,532 982,532 994,487 1003,505 1045,505 1060,545 1072,560 1096,566 1108,618 1120,622 1171,622 1186,640 1198,646 1210,685 1222,687 1237,710 1250,745 1260,745',
        chikou: '38,1050 50,920 65,860 75,720 90,570 105,450 115,418 127,484 140,400 153,330 166,196 180,330 193,370 205,480 229,608 244,482 258,800 280,1068 295,880 308,850 320,745 332,892 346,530 358,685 370,520 382,345 397,500 409,620 421,720 430,380 445,355 460,500 472,400 484,470 496,400 511,160 523,130 535,72 547,328 562,326 574,175 587,370 599,255 613,475 625,455 637,490 649,690 664,750 676,860 700,800 715,870 727,1030 739,1085 766,998 778,1210 792,1090 805,1075 817,1075 829,920 841,695 853,810 865,860 880,915 892,885 904,1180 917,1130 931,545 943,870 955,822 970,820 985,850 1006,1018 1033,960 1045,1045 1060,980 1084,875 1096,915 1108,980 1130,1070 1147,1145'
    },
    {
        x: 560, y: 250,
        candles: `46 d 334 463 330 480;58 d 463 514 422 545;70 d 514 560 442 580;82 u 517 560 510 595;97 d 517 826 490 908;109 u 788 826 452 846;121 u 181 785 162 866;133 d 184 508 96 512;
145 u 500 511 420 622;160 u 457 466 392 490;172 d 457 484 420 520;184 d 484 538 378 545;197 d 538 661 536 678;211 u 628 664 620 668;223 u 598 628 490 640;235 d 595 686 592 716;
247 u 628 686 560 690;262 u 589 628 540 690;274 u 514 590 455 595;286 d 517 542 480 592;298 d 541 628 534 695;313 d 628 662 606 690;325 d 662 724 655 838;337 d 724 788 690 858;
349 u 739 785 706 855;364 u 616 739 540 745;376 d 619 731 592 785;388 u 652 727 616 820;400 u 601 652 560 745;415 u 511 601 475 752;427 d 511 553 290 640;439 u 457 550 454 605;
451 d 457 556 435 570;466 d 556 616 540 660;478 u 499 616 470 622;490 u 472 500 396 526;502 d 472 496 408 520;514 d 493 497 455 502;529 u 490 500 450 504;541 u 403 490 390 498;
553 u 376 403 340 470;565 u 304 376 194 378;580 d 307 349 235 352;592 d 349 496 345 520;604 d 499 517 494 558;616 u 481 520 440 545;631 d 481 565 400 628;643 d 565 583 455 605;
655 d 583 724 535 762;667 u 664 724 625 796;682 u 655 668 562 692;694 u 571 655 548 710;706 u 424 571 415 575;718 u 334 422 285 440;733 d 334 445 270 470;745 u 301 448 285 490;
757 u 193 301 160 312;769 d 196 262 156 275;784 u 235 262 145 270;796 u 190 234 180 256;808 d 190 256 170 280;820 u 220 256 208 262;835 d 223 280 222 285;847 d 280 301 240 304;
859 u 175 301 170 304;871 d 172 223 150 235;886 d 226 298 200 300;898 u 286 298 262 318;910 u 229 290 220 296;922 d 226 301 222 304;935 d 301 406 228 470;949 d 406 422 316 428;
961 u 349 422 282 426;973 d 352 364 330 390;985 u 328 364 250 380;1000 d 331 493 305 500;1012 d 490 553 435 614;1024 u 379 553 366 558;1036 d 379 496 372 505;1050 u 226 496 226 512;
1062 d 229 325 135 354;1074 u 217 325 206 334;1087 d 217 226 142 256;1102 u 211 226 178 280;1114 u 199 211 132 256;1126 u 121 151 72 172;1138 d 121 129 78 190`,
        down: [
            '235,208 247,265 260,285 275,335 298,430 325,445 350,470 365,435 385,425 415,445 430,462 451,475 500,485 550,485 566,455 575,490 585,520 620,520 640,540 655,572 700,580 733,598 748,570 757,528 784,528 796,565 820,566 835,550 845,546 860,525 872,550 885,545 893,505 820,502 808,457 796,455 784,385 769,382 757,349 733,349 718,310 694,286 427,286 418,262 298,259 287,208',
            '1000,502 1012,510 1030,555 1045,550 1060,515 1076,515 1076,502'
        ],
        up: [],
        span: '82,466 148,466 160,440 172,382 184,368 197,364 211,345 223,208 287,208 298,259 310,262 418,262 427,286 694,286 718,310 733,349 757,349 769,382 784,385 796,455 808,457 820,502 1076,502 1087,482 1114,478 1126,498 1140,499',
        base: '97,770 110,720 125,670 145,660 160,626 197,626 211,560 223,460 298,460 325,362 350,361 362,280 859,280 871,332 898,334 910,370 922,372 935,468 961,468 973,511 1100,511 1126,475 1140,475',
        tenkan: '46,566 82,566 97,580 109,585 121,530 133,500 145,504 160,475 184,490 200,495 211,480 223,478 235,405 247,546 285,548 298,575 310,580 325,640 337,652 376,652 388,665 400,692 415,670 427,574 451,574 466,560 490,553 502,530 514,522 529,496 541,522 553,490 570,425 580,415 592,376 616,376 631,405 643,412 655,480 680,525 694,580 706,595 718,545 745,544 757,470 784,430 796,424 808,370 820,343 847,338 859,242 922,245 935,307 973,307 985,330 1000,430 1045,430 1060,325 1114,323 1126,306 1140,304',
        kijun: '120,385 133,455 145,460 160,502 415,502 430,480 448,478 460,560 470,574 553,574 565,523 667,523 680,508 706,505 720,493 745,493 757,478 784,469 985,469 1000,430 1010,425 1024,380 1110,376 1126,343 1140,343',
        chikou: '7,785 25,640 46,725 60,610 85,540 97,525 109,455 121,560 133,610 160,465 184,495 197,470 211,390 235,305 247,360 262,490 274,560 286,480 298,560 325,720 337,665 350,655 364,560 376,420 388,335 400,440 413,320 427,194 439,260 452,230 466,192 478,250 490,225 502,280 514,300 529,178 541,240 553,290 565,290 580,237 592,340 604,410 616,415 631,350 643,360 655,330 667,480 682,545 694,380 706,520 718,228 730,310 745,225 757,215 784,200 796,125 808,125 820,210 835,290 850,340 865,320 880,345 898,480 910,495 922,440 935,370 949,440 961,468 973,605 985,575 1000,640 1012,710 1024,730 1036,765 1050,718 1062,780 1074,775 1087,850 1102,908 1126,770 1140,740'
    },
    {
        x: 940, y: 260,
        candles: `13 d 100 193 94 236;25 d 193 268 192 284;37 d 268 301 236 320;49 d 298 309 296 360;64 u 250 307 236 355;76 d 247 358 186 394;88 d 355 442 272 470;101 d 442 463 364 478;
115 u 412 460 396 500;127 u 334 412 326 440;139 d 334 442 288 446;151 u 430 433 345 490;163 d 430 577 358 628;178 u 535 574 530 698;190 d 535 600 498 642;202 d 598 677 596 684;
214 d 677 697 646 700;229 d 697 739 664 782;241 u 685 739 646 748;253 d 685 757 660 758;265 u 739 747 706 772;280 d 739 817 738 824;292 d 817 880 782 905;304 u 814 878 785 890;
316 u 739 814 425 828;331 u 715 739 618 815;344 u 658 715 625 735;356 u 601 658 480 662;368 u 535 601 524 662;382 d 535 643 494 646;394 d 643 835 606 838;406 u 691 838 672 842;
418 d 691 718 664 784;433 d 715 719 668 782;446 d 718 880 664 885;458 d 880 928 850 1008;470 u 835 928 788 992;484 d 835 883 815 968;496 u 838 883 780 950;508 u 775 838 760 848;
520 u 721 778 650 830;535 u 643 721 604 724;547 u 553 643 534 662;560 d 553 565 505 600;572 u 568 580 540 596;584 u 562 571 544 600;598 d 559 625 550 628;610 d 625 632 600 714;
622 u 595 631 590 718;635 u 532 598 502 604;649 d 532 550 524 590;661 d 550 556 534 606;673 u 541 558 485 610;685 d 538 577 506 600;700 u 475 577 368 600;712 d 475 493 362 512;
724 u 460 493 335 500;736 d 458 462 394 492;751 u 304 466 298 496;763 d 304 475 246 494;775 u 349 473 336 512;787 d 349 442 288 558;802 u 217 442 190 448;814 d 214 314 105 330;
826 u 184 311 165 330;838 u 142 182 124 208;853 u 127 146 82 160`,
        down: ['508,404 525,428 548,432 560,470 575,488 600,492 625,600 640,560 655,570 672,602 725,608 740,625 755,615 775,640 787,700 800,715 815,718 830,765 850,773 880,740 930,720 940,700 967,665 980,680 1020,680 1030,620 1055,602 1050,598 1003,598 988,545 975,523 787,523 775,472 622,472 598,412 560,412 547,370 520,372'],
        up: [
            '-60,470 -20,430 100,400 200,380 260,345 330,300 350,265 390,248 430,275 460,310 480,360 508,404 316,404 304,434 205,455 190,468',
            '1055,598 1090,540 1115,530 1135,480 1155,405 1175,390 1187,358 1187,544 1172,556 1144,556 1120,625 1080,646 1068,638'
        ],
        span: '0,469 190,468 205,455 270,436 304,434 316,404 508,404 520,372 547,370 560,412 598,412 622,472 775,472 787,523 975,523 988,545 1003,598 1055,598 1068,638 1080,646 1092,625 1120,625 1132,598 1144,556 1172,556 1185,544',
        base: '0,445 88,445 101,424 268,424 292,484 445,484 458,511 853,511',
        tenkan: '0,274 13,274 25,182 37,178 49,198 64,200 76,220 88,256 101,265 115,300 127,340 151,346 163,400 175,430 190,485 215,495 229,535 241,538 253,568 265,570 280,665 304,748 316,664 406,662 418,632 446,690 458,751 484,752 508,832 520,830 547,770 572,750 600,725 610,680 622,670 635,610 685,610 700,545 715,540 730,520 745,475 763,430 790,425 802,400 814,331 838,331 853,319',
        kijun: '0,314 151,314 165,335 178,367 214,370 229,412 265,412 280,430 292,470 316,475 331,490 344,547 394,547 406,585 418,598 446,598 458,640 470,682 484,685 496,716 635,716 650,751 685,751 700,690 712,685 724,672 736,669 751,650 763,627 787,622 802,580 814,530 826,480 838,468 853,404',
        chikou: '0,710 13,640 37,540 64,836 76,695 88,710 101,722 127,928 139,840 151,882 175,780 190,700 202,620 214,555 230,565 253,568 280,632 304,535 316,550 355,555 368,485 385,480 397,460 406,455 418,306 433,472 446,355 458,435 470,218 484,315 496,180 508,148 520,127'
    }
];

function place(part) {
    return `translate(${part.x} ${part.y}) scale(${1 / 3})`;
}

function drawCandle(part, line) {
    const [x, dir, top, bottom, high, low] = line.trim().split(' ');
    const cx = Math.floor(part.x + x / 3) + 0.5;
    const y = v => Math.round(part.y + v / 3) + 0.5;
    const cls = dir === 'u' ? 'up' : 'down';
    add('line', { class: cls, x1: cx, x2: cx, y1: y(high), y2: y(low) });
    add('rect', { class: cls, x: cx - 2, y: y(top), width: 4, height: Math.max(1, y(bottom) - y(top)) });
}

// gradients and background
const defs = add('defs', {});
defs.innerHTML = `
    <linearGradient id="bg" x1="0" y1="0" x2="0" y2="1"><stop offset="0" stop-color="#f1f1f2"/><stop offset="1" stop-color="#d7ddf1"/></linearGradient>
    <linearGradient id="gold" x1="0" y1="0" x2="0" y2="1"><stop offset="0" stop-color="#ffe033"/><stop offset="1" stop-color="#eeb400"/></linearGradient>
    <linearGradient id="mint" x1="0" y1="0" x2="0" y2="1"><stop offset="0" stop-color="#a8f8a8"/><stop offset="1" stop-color="#7fd87f"/></linearGradient>
    <linearGradient id="tag" x1="0" y1="0" x2="0" y2="1"><stop offset="0" stop-color="#f6f8fb"/><stop offset="1" stop-color="#d3daea"/></linearGradient>`;
add('rect', { x: 2, y: 96, width: 1912, height: 950, fill: '#fff' });
add('rect', { x: 2, y: 96, width: 1844, height: 929, fill: 'url(#bg)' });

// zones
add('rect', { x: 2, y: 173, width: 1255, height: 702, fill: 'rgba(135, 244, 138, 0.25)' });
add('rect', { x: 575, y: 289, width: 937, height: 281, fill: 'rgba(110, 160, 255, 0.3)' });
add('rect', { x: 2, y: 224, width: 1844, height: 49, fill: 'rgba(240, 190, 65, 0.2)' });

for (const part of parts) {
    for (const points of part.down) add('polygon', { class: 'cloud-down', points, transform: place(part) });
    for (const points of part.up) add('polygon', { class: 'cloud-up', points, transform: place(part) });
}
for (const part of parts) {
    add('polyline', { class: 'chikou', points: part.chikou, transform: place(part) });
}
for (const part of parts) {
    part.candles.split(';').forEach(line => drawCandle(part, line));
}
for (const part of parts) {
    for (const name of ['tenkan', 'span', 'base', 'kijun']) {
        add('polyline', { class: name, points: part[name], transform: place(part) });
    }
}

add('path', { d: 'M2 224.5 H1846 M2 273.5 H1846', stroke: '#f8bd45' });
add('path', { class: 'frame', d: 'M2 173.5 H1257.5 V875.5 H2 M201.5 153.5 H1758.5 V570.5 H201.5 Z M575.5 289.5 H1512.5 V570.5 H575.5 Z' });
add('line', { x1: 553, y1: 533, x2: 1134, y2: 378, stroke: '#0a7d12', 'stroke-width': 2 });
add('line', { x1: 638, y1: 147, x2: 1846, y2: 147, stroke: '#dc0008', 'stroke-width': 2 });
add('text', { x: 1845, y: 144, fill: '#dc0008', 'font-size': 12, 'text-anchor': 'end' }, 'K.D1');
add('line', { x1: 1139, y1: 481.5, x2: 1242, y2: 481.5, stroke: '#000' });
add('text', { x: 1219, y: 478 }, 'Piv J');
add('path', { d: 'M984.5 281.5 h4 v6 h3 l-5 5 l-5 -5 h3 Z', fill: '#d9606a', stroke: '#99303a' });
add('text', { x: 5, y: 1023 }, '© IT-Finance.com');
add('text', { x: 95, y: 1023, 'font-style': 'italic' }, 'Données indicatives');

// axes
add('path', { d: 'M2.5 96 V1025.5 H1846.5 V96 M2 1045.5 H1914', fill: 'none', stroke: '#8b95a1' });
for (let p = 1370; p >= 1332; p -= 2) {
    const y = Math.round(107 + (1370 - p) * 22.8);
    add('line', { x1: 1847, x2: 1851, y1: y + 0.5, y2: y + 0.5, stroke: '#8b95a1' });
    if (p === 1362 || p === 1356) continue;
    const label = String(p / 1000).replace('.', ',');
    add('text', { x: 1853, y: y + 4, class: p % 10 ? 'minor' : 'major' }, label);
}
const days = [['09', 32], ['10', 133], ['11', 235], ['12', 337], ['15', 435], ['16', 532], ['17', 634], ['18', 736], ['19', 838],
    ['22', 935], ['23', 1033], ['24', 1134], ['25', 1236], ['26', 1338], ['29', 1436], ['30', 1533], ['juil.', 1635], ['02', 1737]];
for (const [day, x] of days) {
    add('line', { x1: x + 0.5, x2: x + 0.5, y1: 1026, y2: 1030, stroke: '#8b95a1' });
    add('text', { x: x, y: 1042, class: day === 'juil.' ? 'time major' : 'time' }, day);
}

const tags = [['', 309, '#333'], ['1,35865', 366, '#1f8fe6'], ['1,35742', 394, '#d0101a'], ['1,35583', 428, '#e8a0a8'], ['1,35535', 443, '#22b04a'], ['1,35360', 481, '#000']];
for (const [label, y, color] of tags) {
    if (label) add('line', { x1: 1847, x2: 1851, y1: y + 0.5, y2: y + 0.5, stroke: color });
    add('rect', { x: 1851.5, y: y - 7.5, width: 42, height: 15, fill: 'url(#tag)', stroke: '#8b95a1' });
    if (label) add('text', { x: 1853, y: y + 4, fill: color }, label);
}
add('line', { x1: 1847, x2: 1851, y1: 302.5, y2: 302.5, stroke: '#000' });
add('rect', { x: 1851.5, y: 273.5, width: 61, height: 20, fill: 'url(#gold)', stroke: '#b99a30' });
add('text', { x: 1853, y: 289, class: 'last' }, '1,36147');
add('rect', { x: 1851, y: 293, width: 63, height: 20, fill: 'url(#mint)' });
add('text', { x: 1853, y: 309, class: 'last' }, '43m51s');

// colour palette
const colors = ['#ffffff', '#d0d0d0', '#a8a8a8', '#888888', '#606060', '#000000', '#b4c8ff', '#6c9cff', '#40c0ff', '#0000ff', '#3232d8', '#0000a0', '#8000c0', '#ff80c0',
    '#e06464', '#ff0000', '#e03232', '#804000', '#ff8040', '#ff9080', '#ffc040', '#ffff00', '#40ffc0', '#80ff80', '#00ff00', '#5ad05a', '#32b432', '#008000'];
const palette = document.getElementById('palette');
for (const color of colors) {
    const button = document.createElement('button');
    button.style.backgroundColor = color;
    button.title = color;
    if (color === '#ff0000') button.className = 'picked';
    palette.appendChild(button);
}
```
